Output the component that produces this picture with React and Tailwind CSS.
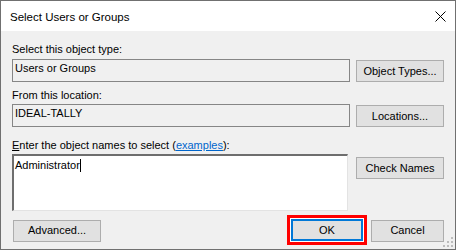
import React from "react";

function Btn({ children, className = "" }) {
  return (
    <div
      className={
        "h-[22px] flex items-center justify-center bg-[#e1e1e1] border border-[#adadad] text-[11px] leading-[13px] text-black " +
        className
      }
    >
      {children}
    </div>
  );
}

export default function App() {
  return (
    <div className="w-[457px] h-[251px] bg-white" style={{ fontFamily: "'Liberation Sans', Arial, sans-serif" }}>
      <div className="relative w-[456px] h-[250px] border border-[#707070] flex flex-col bg-[#f0f0f0]">
        {/* Title bar */}
        <div className="h-[30px] bg-white flex items-center justify-between pl-[9px] pr-[9px] shrink-0">
          <span className="text-[11.5px] leading-[16px] text-black mt-[1px]">
            Select Users or Groups
          </span>
          <svg width="11" height="11" viewBox="0 0 11 11" className="mt-[1px]">
            <path d="M0.5 0.5 L10.5 10.5 M10.5 0.5 L0.5 10.5" stroke="#000" strokeWidth="1" fill="none" />
          </svg>
        </div>

        {/* Body */}
        <div className="flex flex-col pl-[11px] pr-[11px] pt-[12px]">
          <div className="text-[11px] leading-[13px] text-black">Select this object type:</div>
          <div className="mt-[3px] flex items-start justify-between">
            <div className="w-[338px] h-[23px] border border-[#868686] bg-[#f0f0f0] pl-[2px] pt-[2px] text-[11px] leading-[13px] text-black">
              Users or Groups
            </div>
            <Btn className="w-[88px] mt-[1px]">Object Types...</Btn>
          </div>

          <div className="mt-[7px] text-[11px] leading-[13px] text-black">From this location:</div>
          <div className="mt-[2px] flex items-start justify-between">
            <div className="w-[338px] h-[23px] border border-[#868686] bg-[#f0f0f0] pl-[2px] pt-[2px] text-[11px] leading-[13px] text-black">
              IDEAL-TALLY
            </div>
            <Btn className="w-[88px] mt-[1px]">Locations...</Btn>
          </div>

          <div className="mt-[12px] text-[11px] leading-[13px] text-black">
            <span className="underline">E</span>nter the object names to select (
            <span className="text-[#0066cc] underline">examples</span>):
          </div>
          <div className="mt-[2px] flex items-start justify-between">
            <div className="w-[336px] h-[57px] border-t-2 border-l-2 border-t-[#6e6e6e] border-l-[#6e6e6e] border-b border-r border-b-[#e3e3e3] border-r-[#e3e3e3] bg-white pl-[1px] pt-[3px] text-[11px] leading-[13px] text-black flex items-start">
              <span>Administrator</span>
              <span className="inline-block w-[1px] h-[13px] bg-black" />
            </div>
            <Btn className="w-[88px] mt-[3px]">Check Names</Btn>
          </div>

          <div className="mt-[4px] flex items-center justify-between">
            <Btn className="w-[88px] ml-[1px] mt-[1px]">Advanced...</Btn>
            <div className="flex items-center">
              <div className="w-[80px] h-[30px] border-[3px] border-[#ff0000] bg-white p-[1px]">
                <div className="w-full h-full flex items-center justify-center bg-[#e1e1e1] border-2 border-[#0078d7] text-[11px] leading-[13px] text-black">
                  OK
                </div>
              </div>
              <Btn className="w-[73px] ml-[4px] mt-[1px]">Cancel</Btn>
            </div>
          </div>
        </div>

        {/* Resize grip */}
        <svg className="absolute right-[1px] bottom-[1px]" width="11" height="11" viewBox="0 0 11 11">
          <rect x="8" y="0" width="2" height="2" fill="#bcbcbc" />
          <rect x="4" y="4" width="2" height="2" fill="#bcbcbc" />
          <rect x="8" y="4" width="2" height="2" fill="#bcbcbc" />
          <rect x="0" y="8" width="2" height="2" fill="#bcbcbc" />
          <rect x="4" y="8" width="2" height="2" fill="#bcbcbc" />
          <rect x="8" y="8" width="2" height="2" fill="#bcbcbc" />
        </svg>
      </div>
    </div>
  );
}
